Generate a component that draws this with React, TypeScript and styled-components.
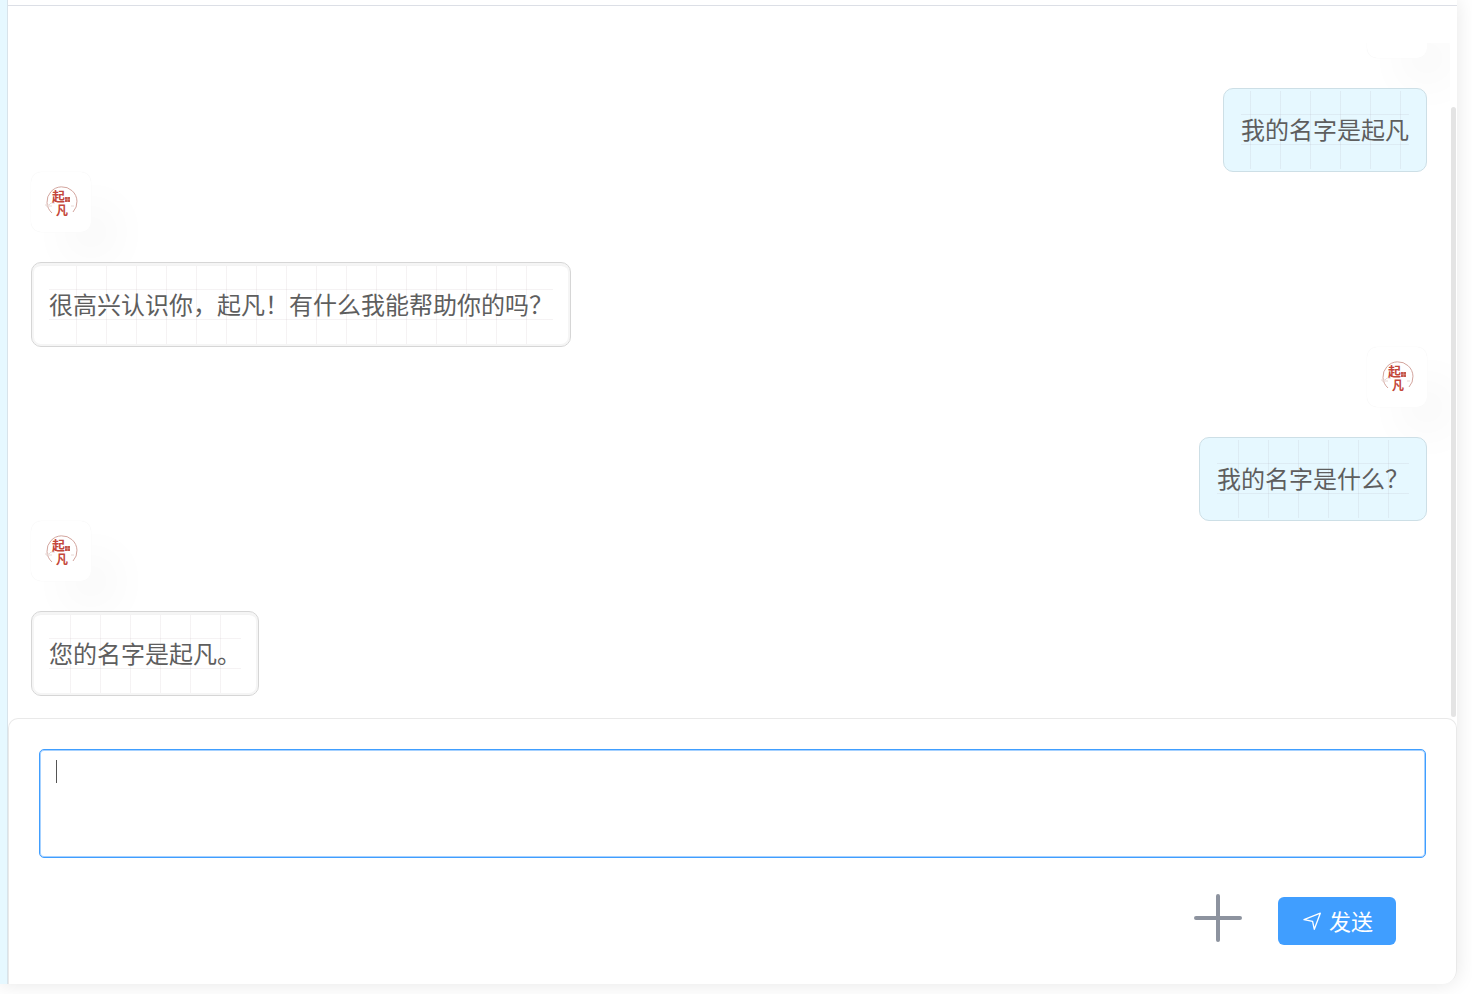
import React from 'react';
import styled, { createGlobalStyle } from 'styled-components';

const Global = createGlobalStyle`
  * { box-sizing: border-box; }
  body { margin: 0; background: #fff; font-family: "Noto Sans", "Noto Sans CJK SC", sans-serif; color: #5e5e5e; }
`;

const Page = styled.div`
  display: flex;
  height: 100vh;
  padding: 0 15px 10px 0;
  overflow: hidden;
`;

const Window = styled.div`
  flex: 1;
  min-width: 0;
  display: flex;
  border-radius: 0 0 14px 0;
  box-shadow: 0 0 20px rgba(0, 0, 0, 0.1);
`;

const Sidebar = styled.aside`
  width: 8px;
  background: #e6f8ff;
  border-right: 1px solid #d8e3ea;
`;

const Chat = styled.main`
  flex: 1;
  min-width: 0;
  display: flex;
  flex-direction: column;
  background: #fff;
  border-radius: 0 0 14px 0;
`;

const Header = styled.header`
  height: 6px;
  flex: none;
  border-bottom: 1px solid #dcdfe6;
`;

const History = styled.section`
  position: relative;
  flex: 1;
  min-height: 0;
  display: flex;
  padding: 37px 7px 0 0;
`;

const Messages = styled.div`
  flex: 1;
  display: flex;
  flex-direction: column;
  justify-content: flex-end;
  overflow: hidden;
  padding: 0 23px 22px;
`;

const ScrollThumb = styled.div`
  position: absolute;
  top: 101px;
  right: 1px;
  bottom: 1px;
  width: 5px;
  border-radius: 3px;
  background: #e4e4e4;
`;

const Message = styled.article<{ $own: boolean }>`
  flex: none;
  display: flex;
  flex-direction: column;
  align-items: ${(p) => (p.$own ? 'flex-end' : 'flex-start')};
  gap: 30px;
`;

const Avatar = styled.div`
  width: 60px;
  height: 60px;
  border-radius: 10px;
  background: #fff;
  box-shadow: 30px 30px 40px #fafafa, 0 0 1px #ececec;
`;

const Bubble = styled.div<{ $own: boolean }>`
  position: relative;
  border: 1px solid ${(p) => (p.$own ? '#cddfe6' : '#d6d6d6')};
  border-radius: 10px;
  background: ${(p) => (p.$own ? '#e6f8ff' : '#fff')};
  padding: ${(p) => (p.$own ? '2px 17px' : '3px 17px 2px')};
  box-shadow: ${(p) => (p.$own ? 'none' : 'inset 0 0 0 2px #f5f5f5, inset 0 3px #f3f3f3')};
`;

const Text = styled.p`
  margin: 0;
  min-height: 78px;
  padding: 21px 0;
  font-size: 24px;
  line-height: 36px;
  background-image:
    linear-gradient(90deg, rgba(60, 10, 30, 0.05) 1px, transparent 1px),
    linear-gradient(0deg, rgba(60, 10, 30, 0.05) 1px, transparent 1px);
  background-size: 30px 30px;
  background-position: center;
`;

const Composer = styled.form`
  flex: none;
  display: flex;
  flex-direction: column;
  gap: 36px;
  padding: 30px 30px 39px;
  border: 1px solid #e9e9e9;
  border-bottom: 0;
  border-radius: 10px 10px 14px 0;
`;

const Field = styled.div`
  position: relative;
  display: flex;
`;

const Input = styled.textarea`
  flex: 1;
  height: 109px;
  padding: 8px 15px;
  border: 1px solid #409eff;
  border-radius: 5px;
  box-shadow: inset 0 0 0 1px #a6d1ff;
  outline: none;
  resize: none;
  background: #fff;
  font: inherit;
  font-size: 22px;
  line-height: 28px;
`;

const Caret = styled.span`
  position: absolute;
  left: 17px;
  top: 11px;
  width: 1px;
  height: 23px;
  background: #555;
`;

const Actions = styled.div`
  display: flex;
  justify-content: flex-end;
  align-items: flex-start;
  gap: 36px;
  padding-right: 30px;
`;

const AddButton = styled.button`
  width: 48px;
  height: 48px;
  padding: 0;
  border: 0;
  background: none;
  svg { display: block; }
`;

const SendButton = styled.button`
  display: flex;
  align-items: center;
  justify-content: center;
  gap: 8px;
  width: 118px;
  height: 48px;
  margin-top: 3px;
  padding: 0 0 2px;
  border: 0;
  border-radius: 6px;
  background: #409eff;
  color: #fff;
  font: inherit;
  font-size: 22px;
`;

const Logo = () => (
  <svg width="60" height="60" viewBox="0 0 60 60" role="img" aria-label="起凡">
    <path d="M21 41A15 15 0 1 1 42 40" fill="none" stroke="#d3a59e" strokeWidth="1" />
    <path d="M14 33h4l2-2h4M15 34h6M40 34h3" fill="none" stroke="#e8d8d5" strokeWidth="1" />
    <g fill="#c4473a" fontFamily="Noto Sans CJK SC, sans-serif" fontWeight="700">
      <text x="21" y="29" fontSize="13">起</text>
      <text x="25" y="43" fontSize="12">凡</text>
    </g>
    <path d="M34 25h5v5h-5z" fill="#c65a4e" />
    <path d="M36.500 25v5M34 27.500h5" stroke="#e3aea7" strokeWidth=".4" />
  </svg>
);

const messages = [
  { own: true, text: '我的名字是起凡' },
  { own: false, text: '很高兴认识你，起凡！有什么我能帮助你的吗？' },
  { own: true, text: '我的名字是什么？' },
  { own: false, text: '您的名字是起凡。' },
];

export default function App() {
  return (
    <Page>
      <Global />
      <Window>
        <Sidebar />
        <Chat>
          <Header />
          <History>
            <Messages>
              {messages.map((m) => (
                <Message key={m.text} $own={m.own}>
                  <Avatar><Logo /></Avatar>
                  <Bubble $own={m.own}><Text>{m.text}</Text></Bubble>
                </Message>
              ))}
            </Messages>
            <ScrollThumb />
          </History>
          <Composer onSubmit={(e) => e.preventDefault()}>
            <Field>
              <Input aria-label="消息" />
              <Caret />
            </Field>
            <Actions>
              <AddButton type="button" aria-label="添加">
                <svg width="48" height="48" fill="none" stroke="#8d939f" strokeWidth="4" strokeLinecap="round">
                  <path d="M24 2v44M2 24h44" />
                </svg>
              </AddButton>
              <SendButton type="submit">
                <svg width="20" height="20" fill="none" stroke="#fff" strokeWidth="1.3" strokeLinejoin="round">
                  <path d="M3 9.700 19.300 3.200 13.300 19.300 11.600 11.300z" />
                </svg>
                发送
              </SendButton>
            </Actions>
          </Composer>
        </Chat>
      </Window>
    </Page>
  );
}
